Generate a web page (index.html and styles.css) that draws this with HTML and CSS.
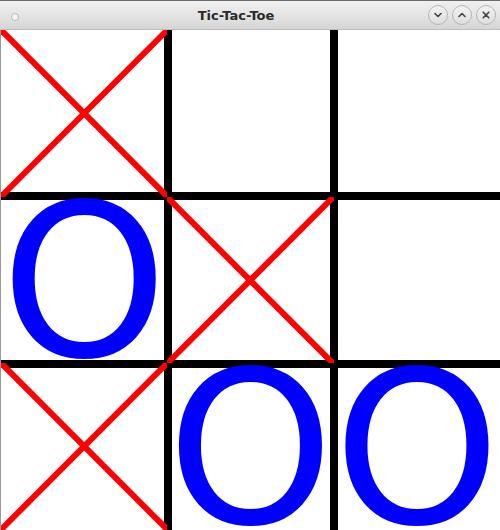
FILE: index.html
```html
<!DOCTYPE html>
<html>
<head>
<meta charset="utf-8">
<link rel="stylesheet" href="styles.css">
</head>
<body>
<div class="window">
  <div class="titlebar">
    <div class="left"><span class="dot"></span></div>
    <div class="title">Tic-Tac-Toe</div>
    <div class="buttons">
      <span class="btn"><svg viewBox="0 0 18 18" width="18" height="18"><path d="M6 7.5 L9 10.5 L12 7.5" fill="none" stroke="#444" stroke-width="1.6" stroke-linecap="round" stroke-linejoin="round"/></svg></span>
      <span class="btn"><svg viewBox="0 0 18 18" width="18" height="18"><path d="M6 10.5 L9 7.5 L12 10.5" fill="none" stroke="#444" stroke-width="1.6" stroke-linecap="round" stroke-linejoin="round"/></svg></span>
      <span class="btn"><svg viewBox="0 0 18 18" width="18" height="18"><path d="M6.2 6.2 L11.8 11.8 M11.8 6.2 L6.2 11.8" fill="none" stroke="#444" stroke-width="1.6" stroke-linecap="round"/></svg></span>
    </div>
  </div>
  <div class="board">
    <div class="cell"><svg class="x" viewBox="0 0 100 100" preserveAspectRatio="none"><line x1="0" y1="0" x2="100" y2="100"/><line x1="100" y1="0" x2="0" y2="100"/></svg></div>
    <div class="cell"></div>
    <div class="cell"></div>
    <div class="cell"><span class="o">O</span></div>
    <div class="cell"><svg class="x" viewBox="0 0 100 100" preserveAspectRatio="none"><line x1="0" y1="0" x2="100" y2="100"/><line x1="100" y1="0" x2="0" y2="100"/></svg></div>
    <div class="cell"></div>
    <div class="cell"><svg class="x" viewBox="0 0 100 100" preserveAspectRatio="none"><line x1="0" y1="0" x2="100" y2="100"/><line x1="100" y1="0" x2="0" y2="100"/></svg></div>
    <div class="cell"><span class="o">O</span></div>
    <div class="cell"><span class="o">O</span></div>
  </div>
</div>
</body>
</html>
```
FILE: styles.css
```css
html, body {
  margin: 0;
  padding: 0;
  background: #ffffff;
}
.window {
  width: 500px;
  height: 530px;
  overflow: hidden;
  display: flex;
  flex-direction: column;
}
.titlebar {
  height: 30px;
  flex-shrink: 0;
  box-sizing: border-box;
  border-top: 1px solid #6a6a6a;
  border-bottom: 1px solid #bdbdbd;
  background: linear-gradient(to bottom, #f0f0f0 0%, #e4e4e4 50%, #d5d5d5 100%);
  display: flex;
  align-items: center;
  font-family: "DejaVu Sans", "Liberation Sans", sans-serif;
}
.left {
  width: 30px;
  display: flex;
  justify-content: center;
  padding-top: 4px;
}
.dot {
  width: 6px;
  height: 6px;
  border-radius: 50%;
  background: #f4f4f4;
  border: 1px solid #b9b9b9;
}
.title {
  flex: 1;
  text-align: center;
  font-weight: bold;
  font-size: 13px;
  color: #2a2a2a;
  padding-left: 14px;
}
.buttons {
  display: flex;
  gap: 4px;
  padding-right: 4px;
}
.btn {
  width: 18px;
  height: 18px;
  border-radius: 50%;
  border: 1px solid #b5b5b5;
  background: linear-gradient(to bottom, #f2f2f2, #dedede);
  display: flex;
  align-items: center;
  justify-content: center;
}
.btn svg {
  display: block;
}
.board {
  height: 500px;
  flex-shrink: 0;
  box-sizing: border-box;
  display: grid;
  grid-template-columns: repeat(3, minmax(0, 1fr));
  grid-template-rows: repeat(3, minmax(0, 1fr));
  border-left: 1px solid #9a9a9a;
  background-color: #ffffff;
  background-image:
    linear-gradient(to right, transparent 163px, #000 163px, #000 171px, transparent 171px, transparent 329px, #000 329px, #000 337px, transparent 337px),
    linear-gradient(to bottom, transparent 162px, #000 162px, #000 170px, transparent 170px, transparent 330px, #000 330px, #000 338px, transparent 338px);
}
.cell {
  display: flex;
  align-items: center;
  justify-content: center;
  overflow: hidden;
  min-width: 0;
  min-height: 0;
}
.x {
  width: 100%;
  height: 100%;
  display: block;
}
.x line {
  stroke: #ff0000;
  stroke-width: 6;
  vector-effect: non-scaling-stroke;
}
.o {
  font-family: "DejaVu Sans", sans-serif;
  font-size: 212px;
  line-height: 160px;
  height: 160px;
  padding-top: 6px;
  color: #0000ff;
}
```
